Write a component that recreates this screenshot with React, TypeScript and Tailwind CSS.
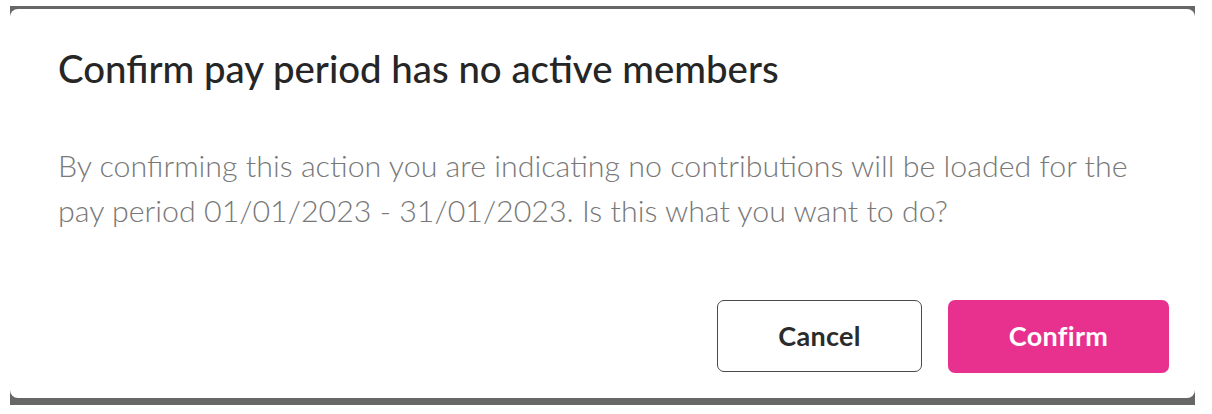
const ConfirmDialog = () => {
  return (
    <div className="w-[1185px] h-[399px] bg-[#676767] pt-[3px] pb-[7px]">
      <div className="h-full bg-white rounded-lg flex flex-col pl-[48px] pr-[26px] pt-[37px]">
        <h2 className="text-[38.4px] leading-[45px] font-medium text-[#262626]">
          Confirm pay period has no active members
        </h2>
        <p className="mt-[52px] text-[30.4px] leading-[45px] font-light text-[#787878]">
          By confirming this action you are indicating no contributions will be loaded for the
          <br />
          pay period 01/01/2023 - 31/01/2023. Is this what you want to do?
        </p>
        <div className="mt-[67px] flex justify-end gap-[26px]">
          <button className="w-[205px] h-[72px] rounded-[7px] border-[1.5px] border-[#4a4a4a] bg-white text-[27px] font-bold tracking-[0.3px] text-[#2b2b2b]">
            Cancel
          </button>
          <button className="w-[221px] h-[73px] rounded-[7px] bg-[#e8308f] text-[27px] font-bold tracking-[0.3px] text-white">
            Confirm
          </button>
        </div>
      </div>
    </div>
  );
};

export default function App() {
  return (
    <div
      className="w-[1212px] h-[414px] bg-white pt-[6px] pl-[10px]"
      style={{ fontFamily: "Lato, 'Open Sans', sans-serif" }}
    >
      <ConfirmDialog />
    </div>
  );
}
